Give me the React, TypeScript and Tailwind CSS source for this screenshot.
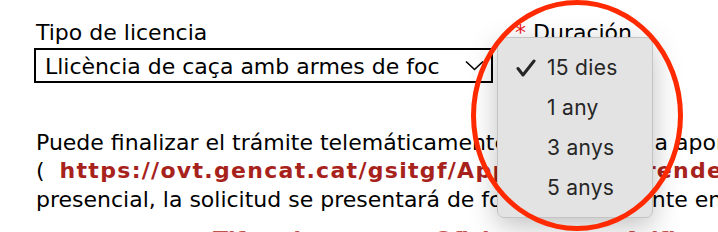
export default function App() {
  const options = ["15 dies", "1 any", "3 anys", "5 anys"]

  return (
    <div className="relative h-[232px] w-full overflow-hidden bg-white font-['DejaVu_Sans',sans-serif] text-black">
      <div className="flex gap-[22px] pl-[34px] pt-[20px]">
        <div className="w-[459px]">
          <label className="block pl-[2px] text-[22px] leading-[26px]">Tipo de licencia</label>
          <div className="mt-[2px] flex h-[35px] items-center justify-between border-2 border-black pl-[9px] pr-[7px] text-[22px] leading-[26px]">
            <span className="pt-[2px]">Llicència de caça amb armes de foc</span>
            <svg width="19" height="11" viewBox="0 0 19 11" fill="none" stroke="black" strokeWidth="1.6">
              <path d="M1 1.5 L9.5 9.5 L18 1.5" />
            </svg>
          </div>
        </div>
        <div>
          <label className="block text-[22px] leading-[26px]">
            <span className="text-[#f01818]">*</span> Duración
          </label>
        </div>
      </div>

      <p className="mt-[46px] whitespace-nowrap pl-[36px] text-[22px] leading-[28.3px]">
        Puede finalizar el trámite telemáticamente mediante una aportación
        <br />
        (<span className="ml-[15px] font-bold tracking-[1.3px] text-[#a8221c]">https://ovt.gencat.cat/gsitgf/AppJava/geni/rendeSolicitud.do</span>
        <br />
        presencial, la solicitud se presentará de forma permanente en
      </p>
      <div className="mt-[12px] flex whitespace-nowrap pl-[36px] text-[22px] font-bold leading-[28px] text-[#c0504a]">
        <span className="ml-[177px]">Tlf</span>
        <span className="ml-[40px]">d</span>
        <span className="ml-[133px]">Ofici</span>
        <span className="ml-[134px]">Atlfb</span>
      </div>

      <div className="absolute left-[497px] top-[37px] w-[156px] rounded-[7px] border border-[#c4c4c4] bg-[#e3e3e3] pb-[9px] pt-[10px] font-['Inter',sans-serif] text-[21px] tracking-[0.3px] text-[#262626] shadow-[0_8px_28px_rgba(0,0,0,0.25)]">
        {options.map((opt, i) => (
          <div key={opt} className="flex h-[40px] items-center">
            <div className="flex w-[49px] justify-end pr-[11px]">
              {i === 0 && (
                <svg width="20" height="18" viewBox="0 0 20 18" fill="none" stroke="#262626" strokeWidth="3" strokeLinecap="round" strokeLinejoin="round">
                  <path d="M2 9.5 L7 16 L18 2" />
                </svg>
              )}
            </div>
            <span>{opt}</span>
          </div>
        ))}
      </div>

      <div className="absolute left-[471px] top-[0px] h-[231px] w-[212px] rounded-[50%] border-[5px] border-[#ff2a00]" />
    </div>
  )
}
